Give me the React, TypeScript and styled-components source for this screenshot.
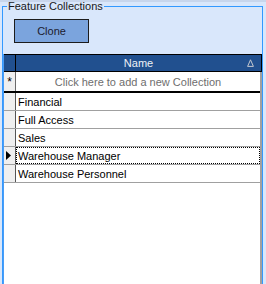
import React from "react";
import styled, { createGlobalStyle } from "styled-components";

const Global = createGlobalStyle`
  html, body { margin: 0; padding: 0; }
  body {
    width: 266px;
    height: 284px;
    overflow: hidden;
    background: linear-gradient(#c8d6ec 0 2px, #d9e7fb 2px);
    font-family: "Liberation Sans", Arial, sans-serif;
    font-size: 11px;
  }
`;

const Group = styled.fieldset`
  margin: 0 3px 0 2px;
  padding: 6px 0 0 0;
  border: 1px solid #3399ff;
  border-bottom: none;
  background: #d9e7fb;
  min-width: 0;
  height: 284px;
  box-sizing: border-box;
  overflow: hidden;
`;

const Legend = styled.legend`
  margin-left: 4px;
  padding: 0 1px;
  font-size: 11px;
  line-height: 13px;
  color: #1a1a1a;
`;

const Button = styled.button`
  display: block;
  margin: 0 0 11px 11px;
  width: 75px;
  height: 24px;
  padding: 0;
  background: #7ba4dd;
  border: 1px solid #1c1c1c;
  font-family: inherit;
  font-size: 11px;
  color: #1b1b2e;
`;

const Grid = styled.div`
  border-left: 1px solid #4a9cf5;
  border-right: 2px solid #a0a0a0;
  background: #fff;
  height: 240px;
`;

const Row = styled.div<{ $h: number; $bottom: string }>`
  display: flex;
  height: ${(p) => p.$h}px;
  border-bottom: ${(p) => p.$bottom};
`;

const Selector = styled.div<{ $bg: string; $line: string }>`
  width: 11px;
  flex: none;
  background: ${(p) => p.$bg};
  border-right: 1px solid ${(p) => p.$line};
  display: flex;
  align-items: center;
  justify-content: center;
  font-size: 12px;
  color: #000;
`;

const HeaderRow = styled.div`
  display: flex;
  height: 16px;
  border: 1px solid #000;
  border-left: none;
  margin-right: -2px;
  background: #21508f;
`;

const HeaderCell = styled.div`
  flex: 1;
  display: grid;
  grid-template-columns: 1fr auto 1fr;
  align-items: center;
  color: #eef0f6;
  font-size: 11px;
`;

const SortGlyph = styled.svg`
  justify-self: end;
  margin-right: 7px;
`;

const Cell = styled.div<{ $focus?: boolean }>`
  flex: 1;
  display: flex;
  align-items: center;
  padding-left: 2px;
  color: #000;
  font-size: 11px;
  outline: ${(p) => (p.$focus ? "1px dotted #000" : "none")};
  outline-offset: -1px;
`;

const AddCell = styled.div`
  flex: 1;
  display: flex;
  align-items: center;
  justify-content: center;
  color: #6e6e6e;
  font-size: 11px;
`;

const Arrow = styled.svg`
  margin-left: -2px;
`;

const rows = [
  "Financial",
  "Full Access",
  "Sales",
  "Warehouse Manager",
  "Warehouse Personnel",
];

export default function App() {
  return (
    <>
      <Global />
      <Group>
        <Legend>Feature Collections</Legend>
        <Button>Clone</Button>
        <Grid>
          <HeaderRow>
            <Selector $bg="#21508f" $line="#000" />
            <HeaderCell>
              <span />
              <span>Name</span>
              <SortGlyph width="7" height="8" viewBox="0 0 7 8">
                <path d="M3.5 0.8 L0.6 7.4 L6.4 7.4 Z" fill="none" stroke="#c4c8d0" strokeWidth="1" />
              </SortGlyph>
            </HeaderCell>
          </HeaderRow>
          <Row $h={19} $bottom="2px solid #000">
            <Selector $bg="#efefef" $line="#6a6a6a">*</Selector>
            <AddCell>Click here to add a new Collection</AddCell>
          </Row>
          {rows.map((r, i) => (
            <Row key={r} $h={17} $bottom="1px solid #a0a0a0">
              <Selector $bg="#efefef" $line="#555">
                {i === 3 && (
                  <Arrow width="5" height="9" viewBox="0 0 5 9">
                    <path d="M0 0 L5 4.5 L0 9 Z" fill="#000" />
                  </Arrow>
                )}
              </Selector>
              <Cell $focus={i === 3}>{r}</Cell>
            </Row>
          ))}
        </Grid>
      </Group>
    </>
  );
}
